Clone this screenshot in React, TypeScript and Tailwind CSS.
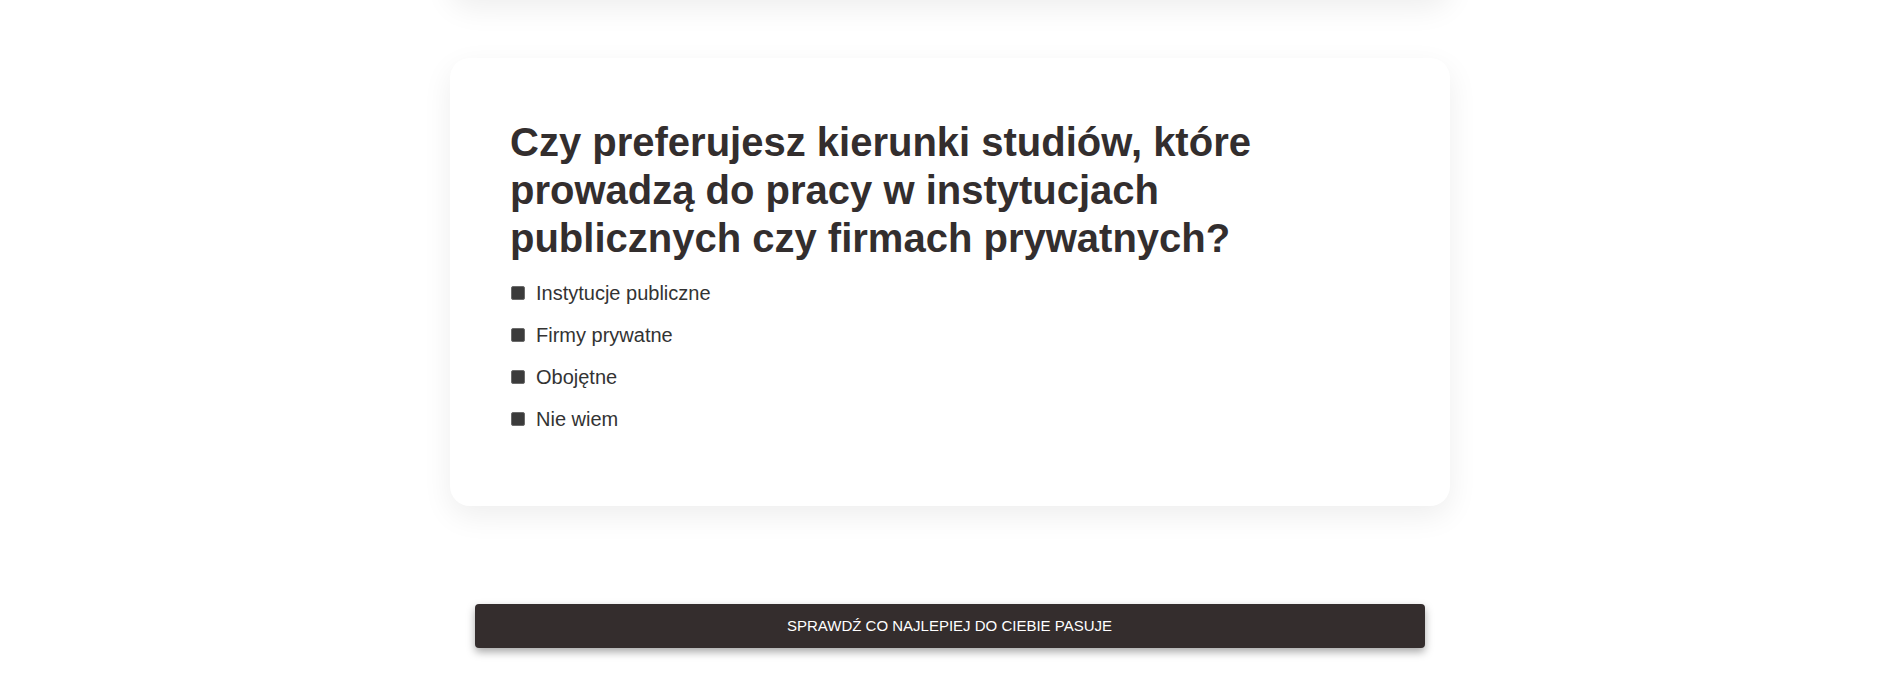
import React from "react";

const options = ["Instytucje publiczne", "Firmy prywatne", "Obojętne", "Nie wiem"];

export default function App() {
  return (
    <div className="min-h-[681px] w-full overflow-hidden bg-white font-['Liberation_Sans',Arial,sans-serif] text-[#332e2e]">
      <div className="flex flex-col items-center">
        <div className="-mt-[202px] ml-[6px] h-[200px] w-[1000px] rounded-[20px] bg-white shadow-[0_10px_30px_rgba(0,0,0,0.07)]" />
        <div className="ml-[6px] mt-[60px] w-[1000px] rounded-[20px] bg-white px-[60px] pt-[60px] pb-[66px] shadow-[0_10px_30px_rgba(0,0,0,0.07)]">
          <h2 className="mb-[10px] text-[40px] font-bold leading-[48px] text-[#332e2e]">
            Czy preferujesz kierunki studiów, które prowadzą do pracy w instytucjach publicznych czy firmach prywatnych?
          </h2>
          <div className="flex flex-col">
            {options.map((o) => (
              <label key={o} className="flex h-[42px] items-center">
                <span className="ml-px mr-[11px] h-[14px] w-[14px] rounded-[2px] border border-[#6b6b6b] bg-[#3b3b3b]" />
                <span className="text-[20px] leading-[22px] text-[#333]">{o}</span>
              </label>
            ))}
          </div>
        </div>
        <button className="ml-[5px] mt-[98px] flex h-[44px] w-[950px] items-center justify-center rounded-[4px] bg-[#342d2d] text-[15px] uppercase text-white shadow-[0_4px_8px_rgba(0,0,0,0.35)]">
          Sprawdź co najlepiej do ciebie pasuje
        </button>
      </div>
    </div>
  );
}
